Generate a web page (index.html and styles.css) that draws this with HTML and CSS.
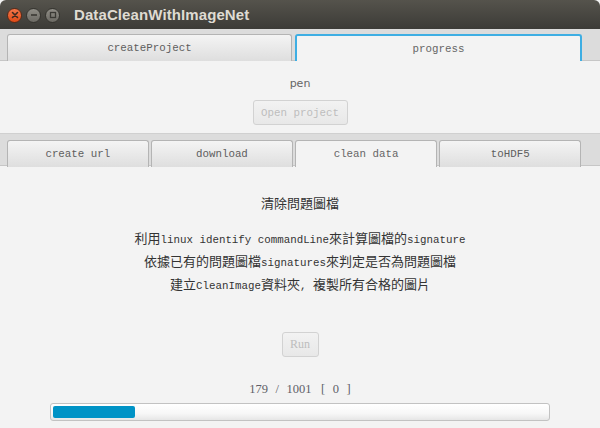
FILE: index.html
```html
<!DOCTYPE html>
<html lang="zh-Hant">

<head>
    <meta charset="UTF-8">
    <meta name="viewport" content="width=device-width, initial-scale=1.0">
    <title>DataCleanWithImageNet</title>
    <link rel="stylesheet" href="styles.css">
</head>

<body>
    <div class="window">
        <!-- 視窗標題列 -->
        <header class="titlebar">
            <div class="wm-buttons">
                <span class="wm-btn close">
                    <svg width="8" height="8" viewBox="0 0 8 8"><path d="M1.5 1.5 L6.5 6.5 M6.5 1.5 L1.5 6.5" stroke="#3c2a20" stroke-width="1.6" stroke-linecap="round"/></svg>
                </span>
                <span class="wm-btn">
                    <svg width="8" height="8" viewBox="0 0 8 8"><path d="M1 4 H7" stroke="#3a3934" stroke-width="1.6"/></svg>
                </span>
                <span class="wm-btn">
                    <svg width="8" height="8" viewBox="0 0 8 8"><rect x="1.5" y="1.5" width="5" height="5" fill="none" stroke="#3a3934" stroke-width="1.3"/></svg>
                </span>
            </div>
            <h1 class="title">DataCleanWithImageNet</h1>
        </header>

        <!-- 上層頁籤 -->
        <div class="tab-pane">
            <nav class="tab-header top-header">
                <div class="tab">createProject</div>
                <div class="tab selected focused">progress</div>
            </nav>
            <div class="project-body">
                <p class="pen">pen</p>
                <button type="button" class="btn mono" disabled>Open project</button>
            </div>
        </div>

        <!-- 下層頁籤 -->
        <div class="tab-pane">
            <nav class="tab-header sub-header">
                <div class="tab">create url</div>
                <div class="tab">download</div>
                <div class="tab selected">clean data</div>
                <div class="tab">toHDF5</div>
            </nav>
            <div class="clean-body">
                <h2 class="clean-title">清除問題圖檔</h2>
                <div class="clean-desc">
                    <p>利用<span class="lat">linux identify commandLine</span>來計算圖檔的<span class="lat">signature</span></p>
                    <p>依據已有的問題圖檔<span class="lat">signatures</span>來判定是否為問題圖檔</p>
                    <p>建立<span class="lat">CleanImage</span>資料夾<span class="lat">, </span>複製所有合格的圖片</p>
                </div>
                <button type="button" class="btn run" disabled>Run</button>
                <div class="counter">
                    <span>179</span><span>/</span><span>1001</span><span class="gap">[</span><span>0</span><span>]</span>
                </div>
                <div class="progress">
                    <div class="progress-fill" style="width: 16.6%"></div>
                </div>
            </div>
        </div>
    </div>
</body>

</html>
```

FILE: styles.css
```css
* {
    box-sizing: border-box;
    margin: 0px;
    padding: 0px;
}

body {
    width: 600px;
    height: 428px;
    overflow: hidden;
    background-color: #f3f3f3;
    font-family: "Liberation Mono", "Noto Sans CJK TC", monospace;
    color: #555555;
}

.window {
    width: 600px;
    height: 428px;
    display: flex;
    flex-direction: column;
    background-color: #f3f3f3;
}

/* 標題列 */
.titlebar {
    height: 29px;
    display: flex;
    align-items: center;
    background: linear-gradient(#55534c, #3c3b37);
    border-radius: 6px 6px 0px 0px;
    padding-left: 7px;
}

.wm-buttons {
    display: flex;
    gap: 4px;
    margin-top: 1px;
}

.wm-btn {
    width: 15px;
    height: 15px;
    border-radius: 50%;
    display: flex;
    align-items: center;
    justify-content: center;
    background: linear-gradient(#8f8d86, #6c6a64);
    border: 1px solid #35342f;
}

.wm-btn.close {
    background: linear-gradient(#f4774a, #df4a16);
    border-color: #5a2a18;
}

.title {
    margin-left: 14px;
    font-family: "Liberation Sans", "Noto Sans", sans-serif;
    font-weight: bold;
    font-size: 15px;
    color: #dfdbd2;
    letter-spacing: 0.1px;
}

/* 頁籤 */
.tab-header {
    display: flex;
    gap: 3px;
    background-color: #dcdcdc;
    border-bottom: 1px solid #c6c6c6;
}

.top-header {
    height: 32px;
    padding: 5px 18px 0px 7px;
}

.sub-header {
    height: 33px;
    padding: 6px 19px 0px 7px;
    gap: 2.5px;
    border-top: 1px solid #d0d0d0;
}

.tab {
    flex: 1;
    height: 27px;
    display: flex;
    align-items: center;
    justify-content: center;
    font-size: 10.8px;
    color: #5e5e5e;
    background: linear-gradient(#f4f4f4, #dedede);
    border: 1px solid #b4b4b4;
    border-bottom: none;
    border-radius: 3px 3px 0px 0px;
    margin-bottom: -1px;
}

.tab.selected {
    background: #f3f3f3;
    color: #666666;
}

.tab.focused {
    border: 2px solid #3eaee3;
    border-bottom: none;
}

/* 上層內容 */
.project-body {
    height: 72px;
    display: flex;
    flex-direction: column;
    align-items: center;
}

.pen {
    margin-top: 15px;
    height: 16px;
    line-height: 16px;
    font-family: "DejaVu Sans", sans-serif;
    font-size: 11px;
    color: #666666;
}

.btn {
    height: 25px;
    border: 1px solid #d2d2d2;
    border-radius: 3px;
    background: linear-gradient(#f2f2f2, #e8e8e8);
    color: #bdbdbd;
}

.btn.mono {
    margin-top: 8px;
    width: 95px;
    font-family: "Liberation Mono", monospace;
    font-size: 10.8px;
}

/* 下層內容 */
.clean-body {
    flex: 1;
    display: flex;
    flex-direction: column;
    align-items: center;
}

.clean-title {
    margin-top: 27px;
    height: 20px;
    line-height: 20px;
    font-family: "Noto Sans CJK TC", sans-serif;
    font-weight: normal;
    font-size: 13px;
    color: #333333;
}

.clean-desc {
    margin-top: 13px;
    text-align: center;
    font-family: "Noto Sans CJK TC", sans-serif;
    font-size: 13px;
    color: #333333;
}

.clean-desc p {
    height: 23px;
    line-height: 23px;
}

.lat {
    font-family: "Liberation Mono", monospace;
    font-size: 10.8px;
}

.btn.run {
    margin-top: 37px;
    width: 37px;
    font-family: "Liberation Serif", serif;
    font-size: 12px;
}

.counter {
    margin-top: 24px;
    height: 16px;
    display: flex;
    gap: 7.5px;
    align-items: center;
    font-family: "Liberation Serif", serif;
    font-size: 12.5px;
    color: #5f5f68;
}

.counter .gap {
    margin-left: 2px;
}

.progress {
    margin-top: 6px;
    width: 500px;
    height: 18px;
    padding: 2px;
    border: 1px solid #c2c2c2;
    border-radius: 3px;
    background: linear-gradient(#ffffff, #f7f7f7 60%, #e6e6e6);
}

.progress-fill {
    height: 100%;
    border-radius: 2px;
    background-color: #0093c6;
}
```
